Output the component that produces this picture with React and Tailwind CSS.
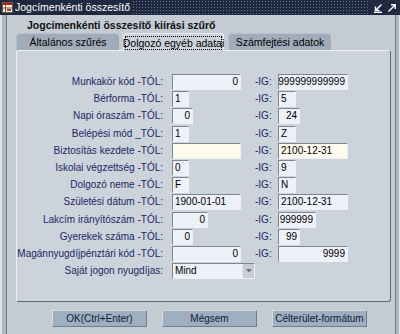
import React from 'react'

const rows = [
  { label: 'Munkakör kód -TÓL:', from: '0', fromW: 69, fromAlign: 'right', to: '999999999999', toW: 70, toAlign: 'right' },
  { label: 'Bérforma -TÓL:', from: '1', fromW: 17, to: '5', toW: 18 },
  { label: 'Napi óraszám -TÓL:', from: '0', fromW: 21, fromAlign: 'right', to: '24', toW: 22, toAlign: 'right' },
  { label: 'Belépési mód _TÓL:', from: '1', fromW: 17, to: 'Z', toW: 18 },
  { label: 'Biztosítás kezdete -TÓL:', from: '', fromW: 69, to: '2100-12-31', toW: 70, cream: true },
  { label: 'Iskolai végzettség -TÓL:', from: '0', fromW: 17, to: '9', toW: 18 },
  { label: 'Dolgozó neme -TÓL:', from: 'F', fromW: 17, to: 'N', toW: 18 },
  { label: 'Születési dátum -TÓL:', from: '1900-01-01', fromW: 69, to: '2100-12-31', toW: 70 },
  { label: 'Lakcím irányítószám -TÓL:', from: '0', fromW: 36, fromAlign: 'right', to: '999999', toW: 38, toAlign: 'right' },
  { label: 'Gyerekek száma -TÓL:', from: '0', fromW: 21, fromAlign: 'right', to: '99', toW: 22, toAlign: 'right' },
  { label: 'Magánnyugdíjpénztári kód -TÓL:', from: '0', fromW: 69, fromAlign: 'right', to: '9999', toW: 70, toAlign: 'right' },
]

function Field({ value, width, align, cream }) {
  return (
    <div
      className={`h-[16px] px-[2px] flex items-center border border-t-[#7d8793] border-l-[#7d8793] border-r-[#eef1f5] border-b-[#eef1f5] text-black leading-none whitespace-nowrap overflow-hidden ${
        cream ? 'bg-[#fdfbee]' : 'bg-[#eef1f8]'
      } ${align === 'right' ? 'justify-end' : 'justify-start'}`}
      style={{ width }}
    >
      {value}
    </div>
  )
}

function TitleBar() {
  return (
    <div className="h-[15px] flex items-center bg-[#1f2a40] bg-[radial-gradient(circle,#6a7590_0.6px,transparent_0.9px)] bg-[length:3px_3px] shrink-0">
      <div className="h-full flex items-center bg-[#1f2a40] pl-[2px] pr-[3px]">
        {/* window icon */}
        <svg width="11" height="11" viewBox="0 0 11 11">
          <rect x="0.5" y="0.5" width="10" height="10" fill="#f2f0e6" stroke="#6b5a3a" />
          <rect x="1" y="1" width="9" height="2" fill="#b02020" />
          <line x1="3.5" y1="3" x2="3.5" y2="10" stroke="#6b5a3a" />
          <line x1="1" y1="6" x2="10" y2="6" stroke="#6b5a3a" />
          <rect x="5" y="7" width="4" height="2" fill="#c83030" />
        </svg>
        <span className="ml-[2px] text-white text-[10.5px] leading-none whitespace-nowrap">Jogcímenkénti összesítő</span>
      </div>
      <div className="flex-1" />
      <div className="h-full flex items-center gap-[4px] bg-[#1f2a40] px-[3px]">
        <svg width="10" height="10" viewBox="0 0 10 10" fill="none" stroke="white" strokeWidth="1.4">
          <path d="M8.5 1.5 L2.5 7.5 M2.5 3.5 V7.5 H6.5" />
          <path d="M1 9.3 H9" />
        </svg>
        <svg width="10" height="10" viewBox="0 0 10 10" fill="none" stroke="white" strokeWidth="1.4">
          <path d="M1.5 8.5 L8 2 M4 1.8 H8.2 V6" />
        </svg>
      </div>
    </div>
  )
}

function Tab({ children, active, width }) {
  if (active) {
    return (
      <div
        className="h-[18px] mb-[-1px] bg-[#ccd3db] rounded-t-[3px] border border-b-0 border-[#e8ecf0] flex items-center justify-center px-[1px] pt-[1px] relative z-10"
        style={{ width }}
      >
        <span className="w-full h-[14px] border border-dotted border-black flex items-center justify-center text-black whitespace-nowrap leading-none text-[10.5px]">
          {children}
        </span>
      </div>
    )
  }
  return (
    <div
      className="h-[17px] bg-[#a0acba] rounded-t-[4px] border-t border-l border-[#b8c2cc] flex items-center justify-center text-black whitespace-nowrap leading-none text-[10.5px]"
      style={{ width }}
    >
      {children}
    </div>
  )
}

function Button({ children }) {
  return (
    <div className="w-[95px] h-[17px] bg-[#9eafc0] border border-[#6f7d8c] border-t-[#d2dae2] border-l-[#d2dae2] flex items-center justify-center text-[#111a3a] whitespace-nowrap leading-none">
      {children}
    </div>
  )
}

export default function App() {
  return (
    <div className="w-[400px] h-[334px] overflow-hidden flex flex-col bg-[#c4cbd3] font-['Liberation_Sans',Arial,sans-serif] text-[10px]">
      <TitleBar />
      <div className="flex-1 flex bg-[#dde2e7] pl-[2px] pr-[1px]">
        <div className="flex-1 flex bg-[#aeb8c2] pl-[4px] pr-[3px]">
          <div className="flex-1 flex flex-col bg-[#c4cbd3] border-l border-r border-[#707a86]">
            {/* heading */}
            <div className="h-[18px] pl-[20px] pt-[5px] font-bold text-[10.5px] text-[#101010] leading-none whitespace-nowrap">
              Jogcímenkénti összesítő kiírási szűrő
            </div>

            {/* tabs */}
            <div className="flex items-end gap-[4px] pl-[9px] h-[17px]">
              <Tab width={103}>Általános szűrés</Tab>
              <Tab width={101} active>Dolgozó egyéb adatai</Tab>
              <Tab width={103}>Számfejtési adatok</Tab>
            </div>

            {/* panel */}
            <div className="ml-[9px] mr-[4px] h-[252px] bg-[#ccd3db] rounded-[3px] border border-t-[#eef1f4] border-l-[#eef1f4] border-r-[#5e6874] border-b-[#5e6874] pt-[23px] flex flex-col gap-[1.2px]">
              {rows.map((r) => (
                <div key={r.label} className="flex items-center h-[16px]">
                  <div className="w-[146px] text-right text-[#1c2766] whitespace-nowrap leading-none">{r.label}</div>
                  <div className="w-[92px] pl-[9px] flex">
                    <Field value={r.from} width={r.fromW} align={r.fromAlign} cream={r.cream} />
                  </div>
                  <div className="w-[23px] text-[#1c2766] leading-none whitespace-nowrap">-IG:</div>
                  <Field value={r.to} width={r.toW} align={r.toAlign} cream={r.cream} />
                </div>
              ))}
              <div className="flex items-center h-[16px]">
                <div className="w-[146px] text-right text-[#1c2766] whitespace-nowrap leading-none">Saját jogon nyugdíjas:</div>
                <div className="pl-[9px] flex">
                  <div className="w-[83px] h-[16px] flex items-center bg-[#eef1f8] border border-t-[#7d8793] border-l-[#7d8793] border-r-[#eef1f5] border-b-[#eef1f5]">
                    <span className="flex-1 pl-[2px] leading-none text-black">Mind</span>
                    <div className="w-[12px] h-[14px] bg-[#c8ced6] border-l border-[#e4e8ec] flex items-center justify-center">
                      <svg width="6" height="4" viewBox="0 0 6 4">
                        <path d="M0 0 H6 L3 3.5 Z" fill="#6a7380" />
                      </svg>
                    </div>
                  </div>
                </div>
              </div>
            </div>

            {/* buttons */}
            <div className="flex gap-[15px] pl-[45px] mt-[8px]">
              <Button>OK(Ctrl+Enter)</Button>
              <Button>Mégsem</Button>
              <Button>Célterület-formátum</Button>
            </div>
          </div>
        </div>
      </div>
    </div>
  )
}
